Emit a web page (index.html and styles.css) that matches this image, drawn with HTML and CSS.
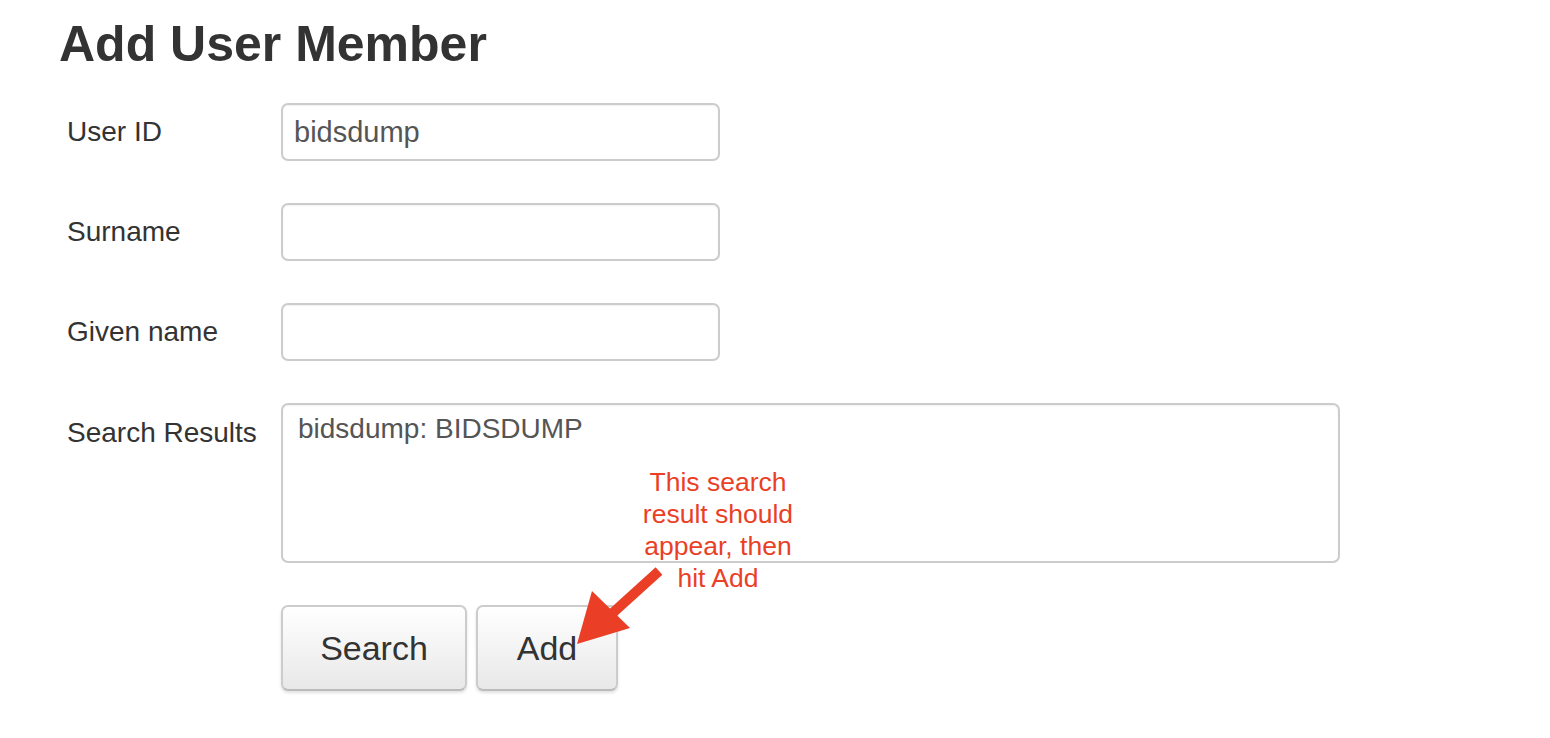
FILE: index.html
```html
<!DOCTYPE html>
<html>
<head>
<meta charset="utf-8">
<link rel="stylesheet" href="styles.css">
</head>
<body>
<div class="page">
  <h1 class="title">Add User Member</h1>
  <form class="form">
    <label class="label">User ID</label>
    <div class="field"><input class="input" type="text" value="bidsdump"></div>
    <label class="label">Surname</label>
    <div class="field"><input class="input" type="text" value=""></div>
    <label class="label">Given name</label>
    <div class="field"><input class="input" type="text" value=""></div>
    <label class="label label-top">Search Results</label>
    <div class="field"><div class="results"><div class="result-item">bidsdump: BIDSDUMP</div></div></div>
    <div></div>
    <div class="buttons">
      <button type="button" class="btn btn-search">Search</button>
      <button type="button" class="btn btn-add">Add</button>
    </div>
  </form>
  <div class="note">This search<br>result should<br>appear, then<br>hit Add</div>
  <svg class="arrow" width="1550" height="738" viewBox="0 0 1550 738">
    <line x1="659" y1="571" x2="606" y2="619" stroke="#ea3f26" stroke-width="10"/>
    <polygon points="577,644 592,591 630,628" fill="#ea3f26"/>
  </svg>
</div>
</body>
</html>
```
FILE: styles.css
```css
* { box-sizing: border-box; }
html, body { margin: 0; padding: 0; background: #fff; }
body { font-family: "Liberation Sans", Arial, Helvetica, sans-serif; color: #333; }
.page { position: relative; width: 1550px; height: 738px; padding: 0 0 0 59px; }
.title {
  margin: 0;
  padding-top: 14px;
  font-size: 50px;
  line-height: 60px;
  font-weight: bold;
  color: #333;
}
.form {
  display: grid;
  grid-template-columns: 214px auto;
  row-gap: 42px;
  margin-top: 29px;
  padding-left: 8px;
}
.label {
  font-size: 28px;
  line-height: 58px;
  color: #333;
}
.label-top { line-height: 60px; }
.input {
  display: block;
  width: 439px;
  height: 58px;
  border: 2px solid #ccc;
  border-radius: 7px;
  padding: 0 11px;
  font-family: "Liberation Sans", Arial, sans-serif;
  font-size: 29px;
  color: #555;
  box-shadow: inset 0 1px 2px rgba(0,0,0,0.06);
  outline: none;
  background: #fff;
}
.results {
  width: 1059px;
  height: 160px;
  border: 2px solid #ccc;
  border-radius: 7px;
  padding: 8px 15px;
  font-size: 28px;
  line-height: 32px;
  color: #555;
  box-shadow: inset 0 1px 2px rgba(0,0,0,0.06);
}
.buttons { display: flex; gap: 9px; }
.btn {
  height: 86px;
  padding: 0 38px;
  border: 2px solid #ccc;
  border-bottom-color: #bbb;
  border-radius: 7px;
  background: linear-gradient(#ffffff, #e8e8e8);
  box-shadow: 0 2px 3px rgba(0,0,0,0.12);
  font-family: "Liberation Sans", Arial, sans-serif;
  font-size: 34px;
  color: #333;
  cursor: pointer;
}
.btn-search { width: 186px; padding: 0; }
.btn-add { width: 142px; padding: 0; }
.note {
  position: absolute;
  left: 618px;
  top: 466px;
  width: 200px;
  text-align: center;
  font-size: 26.5px;
  line-height: 32px;
  color: #ea3f26;
}
.arrow { position: absolute; left: 0; top: 0; pointer-events: none; }
```
